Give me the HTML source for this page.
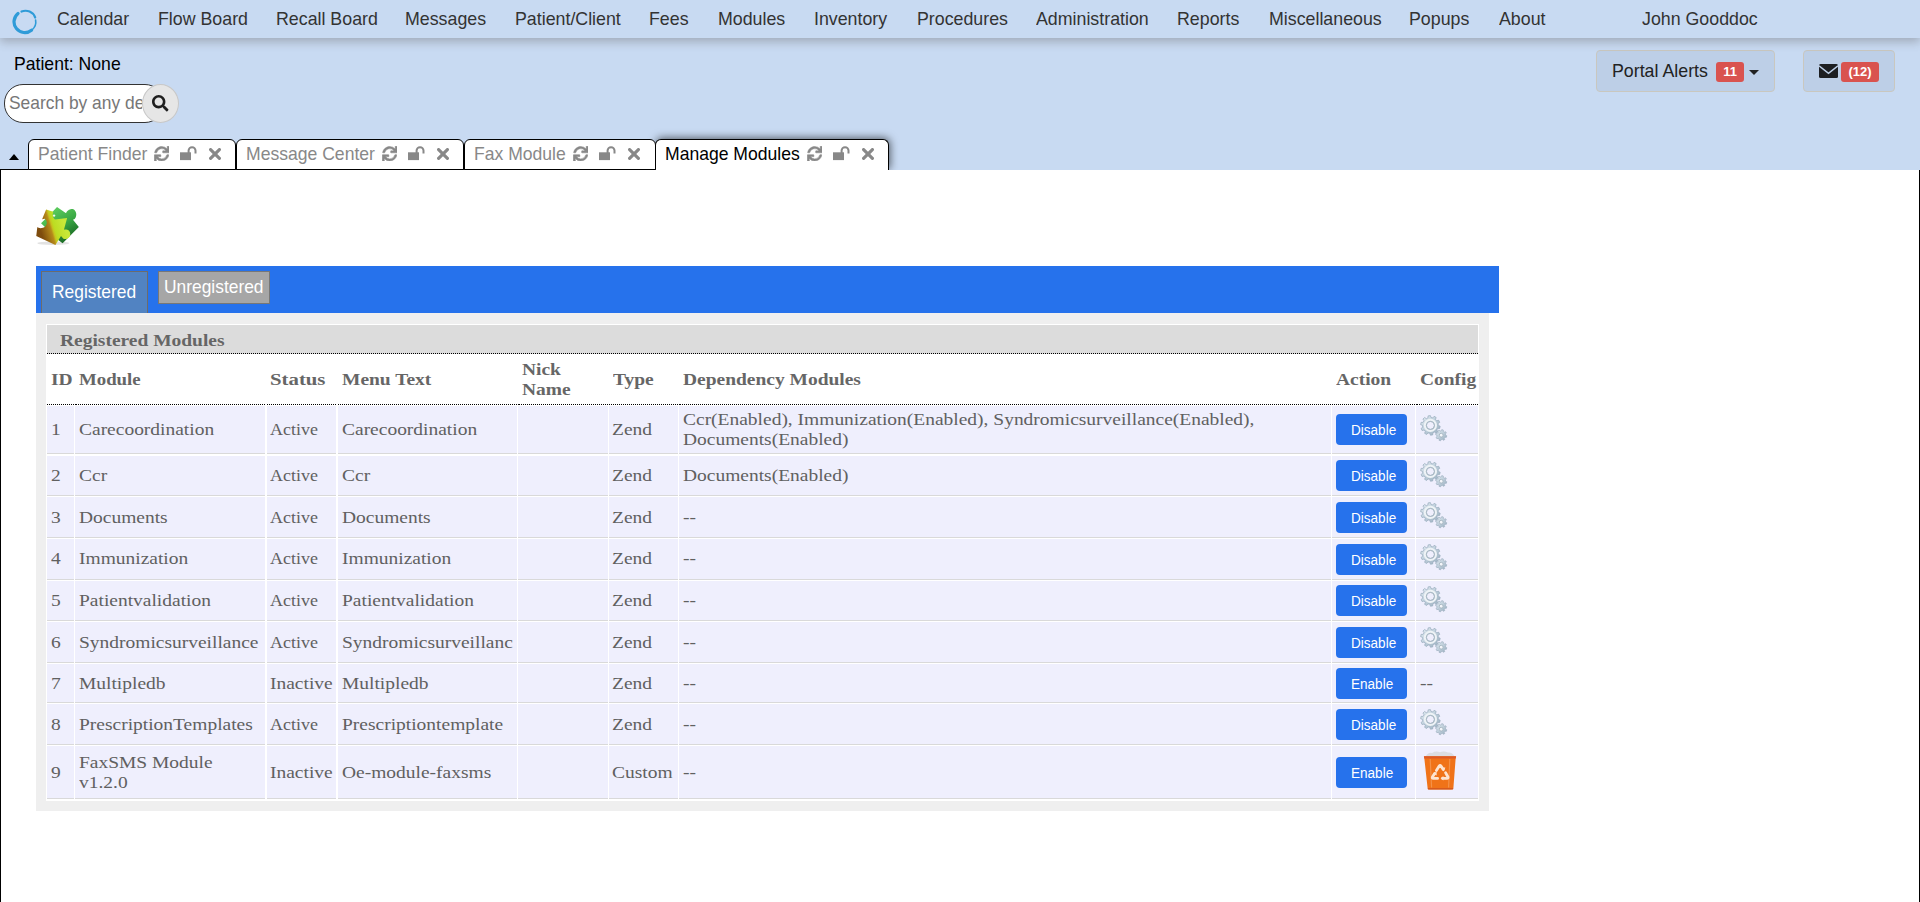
<!DOCTYPE html>
<html><head><meta charset="utf-8">
<style>
*{box-sizing:border-box;}
html,body{margin:0;padding:0;}
body{width:1920px;height:902px;overflow:hidden;position:relative;background:#c8daf2;font-family:"Liberation Sans",sans-serif;}
.a{position:absolute;white-space:nowrap;}
#nav{position:absolute;left:0;top:0;width:1920px;height:38px;background:#c8daf2;box-shadow:0 4px 9px rgba(80,76,70,0.32);z-index:2;}
.ni{position:absolute;top:8px;font-size:18.2px;color:#333;line-height:22px;transform:scaleX(0.978);transform-origin:0 0;}
#content{position:absolute;left:0;top:170px;width:1920px;height:732px;background:#fff;border-left:1px solid #000;border-right:1px solid #000;z-index:1;}
.tab{position:absolute;top:139px;height:31px;background:#fff;border:1px solid #000;border-bottom:1px solid #000;border-radius:6px 6px 0 0;z-index:3;}
.tab .t{position:absolute;left:8px;top:4px;font-size:18.2px;color:#888;line-height:20px;transform:scaleX(0.966);transform-origin:0 0;}
.tab.act{z-index:2;border-bottom:none;height:31px;box-shadow:1px -1px 9px rgba(0,0,0,0.6);clip-path:inset(-14px -14px 0 -14px);}
.tab.act .t{color:#000;}
.s{display:inline-block;transform-origin:0 50%;transform:scaleX(1.18);}
.srf{font-family:"Liberation Serif",serif;font-size:16.5px;color:#606060;}
.hb{font-weight:bold;color:#666;}
.cell{position:absolute;background:#efeffd;border-bottom:1px solid #d9d9d9;}
.btn{position:absolute;left:1336px;width:71px;height:31px;background:#2672ec;border-radius:4px;color:#fff;font-family:"Liberation Sans",sans-serif;font-size:15.4px;line-height:31px;padding-left:15px;}
.ttl{background:#dcdcdc;border-bottom:1px dotted #000;z-index:5;}
.hc{background:#fff;border-bottom:1px dotted #000;z-index:5;display:flex;flex-direction:column;justify-content:center;padding-left:4px;padding-top:2px;font-family:"Liberation Serif",serif;font-size:16.5px;font-weight:bold;color:#666;}
.cell{background:#efeffd;border-bottom:1px solid #d9d9d9;z-index:5;display:flex;flex-direction:column;justify-content:center;padding-left:4px;font-family:"Liberation Serif",serif;font-size:16.5px;color:#606060;}
.ln{line-height:20px;height:20px;white-space:nowrap;position:relative;}
.cell .btn{position:relative;left:0;}
.gear{position:relative;top:-2px;}
.trash{position:relative;left:3px;top:-2px;}
.s2{display:inline-block;transform-origin:0 50%;transform:scaleX(0.88);}
</style></head><body>
<div id="nav">
  
  <div class="ni" style="left:57px">Calendar</div>
  <div class="ni" style="left:158px">Flow Board</div>
  <div class="ni" style="left:276px">Recall Board</div>
  <div class="ni" style="left:405px">Messages</div>
  <div class="ni" style="left:515px">Patient/Client</div>
  <div class="ni" style="left:649px">Fees</div>
  <div class="ni" style="left:718px">Modules</div>
  <div class="ni" style="left:814px">Inventory</div>
  <div class="ni" style="left:916.5px">Procedures</div>
  <div class="ni" style="left:1036px">Administration</div>
  <div class="ni" style="left:1177px">Reports</div>
  <div class="ni" style="left:1268.5px">Miscellaneous</div>
  <div class="ni" style="left:1409px">Popups</div>
  <div class="ni" style="left:1498.5px">About</div>
  <div class="ni" style="left:1642px">John Gooddoc</div>
</div>
<div class="a" style="left:14px;top:53px;font-size:18.2px;color:#000;line-height:22px;transform:scaleX(0.968);transform-origin:0 0">Patient: None</div>
<div class="a" style="left:4px;top:84px;width:160px;height:39px;background:#fff;border:1px solid #333;border-radius:19px;"></div>
<div class="a" style="left:9px;top:92px;width:133px;overflow:hidden;line-height:22px"><div style="font-size:18.2px;color:#777;transform:scaleX(0.956);transform-origin:0 0">Search by any demographics</div></div>
<div class="a" style="left:142px;top:84px;width:37px;height:39px;background:#e6e6e6;border:1px solid #c8c8c8;border-radius:50%;"></div>

<div id="content"></div>
<div class="a" style="left:0;top:169px;width:656px;height:1px;background:#000;z-index:2"></div>
<div class="a" style="left:9px;top:154px;width:0;height:0;border-left:5px solid transparent;border-right:5px solid transparent;border-bottom:6px solid #000;z-index:3"></div>
<div class="tab" style="left:28px;width:208px"><span class="t" style="left:8.5px">Patient Finder</span></div>
<div class="tab" style="left:236px;width:228px"><span class="t" style="left:8.5px">Message Center</span></div>
<div class="tab" style="left:464px;width:192px"><span class="t" style="left:8.5px">Fax Module</span></div>
<div class="tab act" style="left:655px;width:234px"><span class="t" style="left:8.5px">Manage Modules</span></div>

<!-- content -->
<div class="a" style="left:36px;top:266px;width:1463px;height:47px;background:#2672ec;z-index:4"></div>
<div class="a" style="left:41px;top:271px;width:107px;height:42px;background:#5183c2;border:1px solid #6c6c6c;border-bottom:none;z-index:5"></div>
<div class="a" style="left:52px;top:281px;font-size:18.2px;color:#fff;z-index:6;line-height:22px;transform:scaleX(0.956);transform-origin:0 0">Registered</div>
<div class="a" style="left:158px;top:271px;width:112px;height:33px;background:#a6a6a6;border:1px solid #777;z-index:5"></div>
<div class="a" style="left:164px;top:276px;font-size:18.2px;color:#fff;z-index:6;line-height:22px;transform:scaleX(0.956);transform-origin:0 0">Unregistered</div>
<div class="a" style="left:36px;top:313px;width:1453px;height:498px;background:#efefef;z-index:4"></div>
<div class="a" style="left:46px;top:324px;width:1433px;height:477px;background:#fff;z-index:4"></div>
<svg width="0" height="0" style="position:absolute">
<defs>
<linearGradient id="gg" x1="0" y1="0" x2="1" y2="1"><stop offset="0" stop-color="#e4ecf2"/><stop offset="0.45" stop-color="#c2d2de"/><stop offset="1" stop-color="#98adbd"/></linearGradient>
<symbol id="gear" viewBox="0 0 28 28">
<path d="M18.30,11.40 L20.17,12.14 L19.72,14.43 L17.71,14.40 L16.79,16.04 L17.87,17.74 L16.16,19.33 L14.55,18.12 L12.84,18.91 L12.72,20.92 L10.40,21.20 L9.80,19.28 L7.96,18.91 L6.68,20.47 L4.64,19.33 L5.29,17.42 L4.01,16.04 L2.06,16.55 L1.08,14.43 L2.72,13.27 L2.50,11.40 L0.63,10.66 L1.08,8.37 L3.09,8.40 L4.01,6.76 L2.93,5.06 L4.64,3.47 L6.25,4.68 L7.96,3.89 L8.08,1.88 L10.40,1.60 L11.00,3.52 L12.84,3.89 L14.12,2.33 L16.16,3.47 L15.51,5.38 L16.79,6.76 L18.74,6.25 L19.72,8.37 L18.08,9.53 Z" fill="url(#gg)" stroke="#97aabb" stroke-width="0.7"/>
<circle cx="10.4" cy="11.4" r="5.6" fill="none" stroke="#eef3f6" stroke-width="2"/>
<circle cx="10.4" cy="11.4" r="4" fill="#efeffd" stroke="#9fb0bb" stroke-width="1"/>
<path d="M25.50,21.20 L26.78,21.73 L26.37,23.34 L25.00,23.21 L24.24,24.24 L24.77,25.51 L23.34,26.37 L22.46,25.31 L21.20,25.50 L20.67,26.78 L19.06,26.37 L19.19,25.00 L18.16,24.24 L16.89,24.77 L16.03,23.34 L17.09,22.46 L16.90,21.20 L15.62,20.67 L16.03,19.06 L17.40,19.19 L18.16,18.16 L17.63,16.89 L19.06,16.03 L19.94,17.09 L21.20,16.90 L21.73,15.62 L23.34,16.03 L23.21,17.40 L24.24,18.16 L25.51,17.63 L26.37,19.06 L25.31,19.94 Z" fill="url(#gg)" stroke="#97aabb" stroke-width="0.6"/>
<circle cx="21.2" cy="21.2" r="1.9" fill="#f4f6fa" stroke="#9fb0bb" stroke-width="0.8"/>
</symbol>
<symbol id="trash" viewBox="0 0 34 40">
<path d="M2.5,6.8 Q5,2 9,3 Q13,0.6 17,2.2 Q21,0.4 25,2.6 Q29,2 32,6.8 Z" fill="#dcdde2"/>
<path d="M1,6.3 L33,6.3 L32.6,9 L30.4,38 Q30,39.6 28,39.6 L6.5,39.6 Q4.8,39.6 4.6,38 L1.4,9 Z" fill="#f07318"/>
<path d="M0.9,6.3 L33.1,6.3 L32.8,8.6 L1.2,8.6 Z" fill="#dd5a26"/>
<path d="M7.2,9 L8.6,37.5 M26.8,9 L25.6,37.5" stroke="#f59a55" stroke-width="1.2" opacity="0.8"/>
<path d="M4.6,38 L30.4,38 L30,39.6 L5,39.6 Z" fill="#d65a1e"/>
<g fill="none" stroke="#fde4d0" stroke-width="2.8" stroke-linejoin="round" stroke-linecap="round"><path d="M13.4,20.6 L16.2,16 Q17.1,14.8 18,16 L20.2,19.6"/><path d="M22.6,22.8 L25,27 Q25.5,28.4 24,28.4 L19.6,28.4"/><path d="M14.6,28.4 L10.2,28.4 Q8.8,28.4 9.4,27 L11.6,23.4"/></g><g fill="#fde4d0"><path d="M18.6,17.6 L22.4,17.6 L20.8,21.6 Z"/><path d="M20.4,26 L20.4,30.6 L17.6,28.3 Z"/><path d="M9.8,23.6 L13.6,21.8 L13.6,25.6 Z"/></g>
</symbol>
<symbol id="sync" viewBox="-10 -10 532 532"><path fill="#888" stroke="#888" stroke-width="18" stroke-linejoin="round" d="M440.65 12.57l4 82.77A247.16 247.16 0 0 0 255.83 8C134.73 8 33.91 94.92 12.29 209.82A12 12 0 0 0 24.09 224h49.05a12 12 0 0 0 11.67-9.26 175.910 175.910 0 0 1 317-56.94l-101.46-4.86a12 12 0 0 0-12.57 12v47.41a12 12 0 0 0 12 12H500a12 12 0 0 0 12-12V12a12 12 0 0 0-12-12h-47.37a12 12 0 0 0-11.98 12.57zM255.83 432a175.61 175.61 0 0 1-146-77.8l101.8 4.87a12 12 0 0 0 12.57-12v-47.4a12 12 0 0 0-12-12H12a12 12 0 0 0-12 12V500a12 12 0 0 0 12 12h47.35a12 12 0 0 0 12-12.6l-4.150-82.57A247.17 247.17 0 0 0 255.83 504c121.11 0 221.93-86.92 243.55-201.82a12 12 0 0 0-11.8-14.18h-49.05a12 12 0 0 0-11.67 9.26A175.86 175.86 0 0 1 255.83 432z"/></symbol>
<symbol id="unlock" viewBox="0 0 17 15">
<rect x="0" y="6.3" width="11" height="7.8" fill="#888"/>
<path d="M8.6,7 V4.6 A3.45,3.45 0 0 1 15.5,4.6 V7.6" fill="none" stroke="#888" stroke-width="2"/>
</symbol>
<symbol id="times" viewBox="0 0 12 12">
<path d="M1.6,1.6 L10.4,10.4 M10.4,1.6 L1.6,10.4" stroke="#888" stroke-width="3.2" stroke-linecap="round"/>
</symbol>
</defs></svg>
<!-- tab icons -->
<svg class="a" style="left:153.5px;top:145.5px;z-index:6" width="15.5" height="15.5"><use href="#sync"/></svg>
<svg class="a" style="left:180px;top:146px;z-index:6" width="17" height="15"><use href="#unlock"/></svg>
<svg class="a" style="left:209px;top:148px;z-index:6" width="12" height="12"><use href="#times"/></svg>
<svg class="a" style="left:381.5px;top:145.5px;z-index:6" width="15.5" height="15.5"><use href="#sync"/></svg>
<svg class="a" style="left:408px;top:146px;z-index:6" width="17" height="15"><use href="#unlock"/></svg>
<svg class="a" style="left:437px;top:148px;z-index:6" width="12" height="12"><use href="#times"/></svg>
<svg class="a" style="left:572.5px;top:145.5px;z-index:6" width="15.5" height="15.5"><use href="#sync"/></svg>
<svg class="a" style="left:599px;top:146px;z-index:6" width="17" height="15"><use href="#unlock"/></svg>
<svg class="a" style="left:628px;top:148px;z-index:6" width="12" height="12"><use href="#times"/></svg>
<svg class="a" style="left:806.5px;top:145.5px;z-index:6" width="15.5" height="15.5"><use href="#sync"/></svg>
<svg class="a" style="left:833px;top:146px;z-index:6" width="17" height="15"><use href="#unlock"/></svg>
<svg class="a" style="left:862px;top:148px;z-index:6" width="12" height="12"><use href="#times"/></svg>
<!-- search icon -->
<svg class="a" style="left:152px;top:95px;z-index:3" width="16.5" height="16.5" viewBox="0 0 512 512"><path fill="#1f1f1f" d="M505 442.7L405.3 343c-4.5-4.5-10.600-7-17-7H372c27.6-35.3 44-79.7 44-128C416 93.100 322.900 0 208 0S0 93.100 0 208s93.100 208 208 208c48.3 0 92.7-16.4 128-44v16.3c0 6.4 2.5 12.5 7 17l99.7 99.7c9.4 9.4 24.6 9.4 33.9 0l28.3-28.3c9.4-9.4 9.4-24.6.1-34zM208 336c-70.7 0-128-57.2-128-128 0-70.7 57.2-128 128-128 70.7 0 128 57.2 128 128 0 70.7-57.2 128-128 128z"/></svg>
<!-- portal alerts -->
<div class="a" style="left:1596px;top:50px;width:179px;height:42px;background:#bdcfe7;border:1px solid #c9c7bf;border-radius:4px;"></div>
<div class="a" style="left:1612px;top:60px;font-size:18.2px;color:#222;line-height:22px;transform:scaleX(0.978);transform-origin:0 0">Portal Alerts</div>
<div class="a" style="left:1716px;top:62px;width:28px;height:20px;background:#d9534f;border-radius:3px;color:#fff;font-size:13px;font-weight:bold;line-height:20px;text-align:center">11</div>
<div class="a" style="left:1749px;top:70px;width:0;height:0;border-left:5px solid transparent;border-right:5px solid transparent;border-top:5px solid #222"></div>
<div class="a" style="left:1803px;top:50px;width:92px;height:42px;background:#bdcfe7;border:1px solid #c9c7bf;border-radius:4px;"></div>
<svg class="a" style="left:1819px;top:64px" width="19" height="14" viewBox="0 0 19 14"><rect x="0" y="0" width="19" height="14" rx="1.5" fill="#1d1f22"/><path d="M0,1.8 L9.5,9.4 L19,1.8" fill="none" stroke="#bdcfe7" stroke-width="1.5"/></svg>
<div class="a" style="left:1841px;top:62px;width:38px;height:20px;background:#d9534f;border-radius:3px;color:#fff;font-size:13px;font-weight:bold;line-height:20px;text-align:center">(12)</div>
<!-- puzzle -->
<svg class="a" style="left:32px;top:202px;z-index:3" width="52" height="48" viewBox="0 0 977 902">
<defs><linearGradient id="yg" gradientUnits="userSpaceOnUse" x1="180" y1="600" x2="620" y2="470"><stop offset="0" stop-color="#7e4c0e"/><stop offset="0.42" stop-color="#b68a1a"/><stop offset="0.5" stop-color="#c6c41e"/><stop offset="0.58" stop-color="#bcdc22"/><stop offset="1" stop-color="#c8e838"/></linearGradient>
<linearGradient id="grg" gradientUnits="userSpaceOnUse" x1="450" y1="150" x2="750" y2="650"><stop offset="0" stop-color="#58c85a"/><stop offset="0.5" stop-color="#3aa845"/><stop offset="1" stop-color="#1c6e26"/></linearGradient></defs>
<ellipse cx="400" cy="775" rx="300" ry="32" fill="#e2e2e2"/>
<path d="M470,95 L640,210 C650,170 700,125 765,130 C830,150 860,250 800,320 L770,335 L880,470 L575,775 L500,720 L170,400 L400,170 Z" fill="url(#grg)"/>
<path d="M265,140 L400,185 C380,230 385,290 430,330 L660,300 L600,520 C650,505 720,530 720,600 C715,680 650,710 590,690 L545,640 L440,810 L80,640 L100,470 C130,500 200,500 250,460 C290,420 290,350 240,315 L190,325 Z" fill="url(#yg)"/>
<circle cx="415" cy="255" r="22" fill="#fff" opacity="0.9"/>
</svg>
<!-- logo -->
<svg class="a" style="left:12px;top:8px;z-index:3" width="27" height="28" viewBox="0 0 27 28"><g fill="none" stroke="#2f9bd8" stroke-linecap="round"><path d="M6,5.5 A10.3,10.3 0 0 0 19.5,22.2" stroke-width="3.2"/><path d="M9.5,3.6 A10.3,10.3 0 0 1 23.2,9.5" stroke-width="2.2"/><path d="M23.6,12 A10.3,10.3 0 0 1 19.8,22" stroke-width="1.6"/></g></svg>
<!--TABLE-->
<div class="a ttl" style="left:47px;top:325px;width:1431px;height:29px"><span class="s hb srf" style="position:absolute;left:13px;top:6px">Registered Modules</span></div>
<div class="a hc" style="left:47px;top:354px;width:27px;height:51px"><div class="ln" style="left:0px"><span class="s">ID</span></div></div>
<div class="a hc" style="left:75px;top:354px;width:190px;height:51px"><div class="ln" style="left:0px"><span class="s" style="transform:scaleX(1.14)">Module</span></div></div>
<div class="a hc" style="left:267px;top:354px;width:69px;height:51px"><div class="ln" style="left:-1px"><span class="s" style="transform:scaleX(1.26)">Status</span></div></div>
<div class="a hc" style="left:338px;top:354px;width:179px;height:51px"><div class="ln" style="left:0px"><span class="s">Menu Text</span></div></div>
<div class="a hc" style="left:518px;top:354px;width:90px;height:51px"><div class="ln" style="left:0px"><span class="s">Nick</span></div><div class="ln" style="left:0px"><span class="s">Name</span></div></div>
<div class="a hc" style="left:609px;top:354px;width:69px;height:51px"><div class="ln" style="left:0px"><span class="s">Type</span></div></div>
<div class="a hc" style="left:679px;top:354px;width:652px;height:51px"><div class="ln" style="left:0px"><span class="s">Dependency Modules</span></div></div>
<div class="a hc" style="left:1332px;top:354px;width:83px;height:51px"><div class="ln" style="left:0px"><span class="s">Action</span></div></div>
<div class="a hc" style="left:1416px;top:354px;width:62px;height:51px"><div class="ln" style="left:0px"><span class="s">Config</span></div></div>
<div class="a cell" style="left:47px;top:406px;width:27px;height:48px"><div class="ln" style="top:0px;left:0px"><span class="s">1</span></div></div>
<div class="a cell" style="left:75px;top:406px;width:190px;height:48px"><div class="ln" style="top:0px;left:0px"><span class="s">Carecoordination</span></div></div>
<div class="a cell" style="left:267px;top:406px;width:69px;height:48px"><div class="ln" style="top:0px;left:-1px"><span class="s" style="transform:scaleX(1.09)">Active</span></div></div>
<div class="a cell" style="left:338px;top:406px;width:179px;height:48px"><div class="ln" style="top:0px;left:0px"><span class="s">Carecoordination</span></div></div>
<div class="a cell" style="left:518px;top:406px;width:90px;height:48px"></div>
<div class="a cell" style="left:609px;top:406px;width:69px;height:48px"><div class="ln" style="top:0px;left:-1px"><span class="s">Zend</span></div></div>
<div class="a cell" style="left:679px;top:406px;width:652px;height:48px"><div class="ln" style="top:0px;left:0px"><span class="s">Ccr(Enabled), Immunization(Enabled), Syndromicsurveillance(Enabled),</span></div><div class="ln" style="top:0px;left:0px"><span class="s">Documents(Enabled)</span></div></div>
<div class="a cell" style="left:1332px;top:406px;width:83px;height:48px"><div class="btn"><span class="s2">Disable</span></div></div>
<div class="a cell" style="left:1416px;top:406px;width:62px;height:48px"><svg class="gear" width="28" height="28"><use href="#gear"/></svg></div>
<div class="a cell" style="left:47px;top:456px;width:27px;height:40px"><div class="ln" style="top:0px;left:0px"><span class="s">2</span></div></div>
<div class="a cell" style="left:75px;top:456px;width:190px;height:40px"><div class="ln" style="top:0px;left:0px"><span class="s">Ccr</span></div></div>
<div class="a cell" style="left:267px;top:456px;width:69px;height:40px"><div class="ln" style="top:0px;left:-1px"><span class="s" style="transform:scaleX(1.09)">Active</span></div></div>
<div class="a cell" style="left:338px;top:456px;width:179px;height:40px"><div class="ln" style="top:0px;left:0px"><span class="s">Ccr</span></div></div>
<div class="a cell" style="left:518px;top:456px;width:90px;height:40px"></div>
<div class="a cell" style="left:609px;top:456px;width:69px;height:40px"><div class="ln" style="top:0px;left:-1px"><span class="s">Zend</span></div></div>
<div class="a cell" style="left:679px;top:456px;width:652px;height:40px"><div class="ln" style="top:0px;left:0px"><span class="s">Documents(Enabled)</span></div></div>
<div class="a cell" style="left:1332px;top:456px;width:83px;height:40px"><div class="btn"><span class="s2">Disable</span></div></div>
<div class="a cell" style="left:1416px;top:456px;width:62px;height:40px"><svg class="gear" width="28" height="28"><use href="#gear"/></svg></div>
<div class="a cell" style="left:47px;top:497px;width:27px;height:41px"><div class="ln" style="top:1px;left:0px"><span class="s">3</span></div></div>
<div class="a cell" style="left:75px;top:497px;width:190px;height:41px"><div class="ln" style="top:1px;left:0px"><span class="s">Documents</span></div></div>
<div class="a cell" style="left:267px;top:497px;width:69px;height:41px"><div class="ln" style="top:1px;left:-1px"><span class="s" style="transform:scaleX(1.09)">Active</span></div></div>
<div class="a cell" style="left:338px;top:497px;width:179px;height:41px"><div class="ln" style="top:1px;left:0px"><span class="s">Documents</span></div></div>
<div class="a cell" style="left:518px;top:497px;width:90px;height:41px"></div>
<div class="a cell" style="left:609px;top:497px;width:69px;height:41px"><div class="ln" style="top:1px;left:-1px"><span class="s">Zend</span></div></div>
<div class="a cell" style="left:679px;top:497px;width:652px;height:41px"><div class="ln" style="top:1px;left:0px"><span class="s">--</span></div></div>
<div class="a cell" style="left:1332px;top:497px;width:83px;height:41px"><div class="btn"><span class="s2">Disable</span></div></div>
<div class="a cell" style="left:1416px;top:497px;width:62px;height:41px"><svg class="gear" width="28" height="28"><use href="#gear"/></svg></div>
<div class="a cell" style="left:47px;top:539px;width:27px;height:41px"><div class="ln" style="top:0px;left:0px"><span class="s">4</span></div></div>
<div class="a cell" style="left:75px;top:539px;width:190px;height:41px"><div class="ln" style="top:0px;left:0px"><span class="s">Immunization</span></div></div>
<div class="a cell" style="left:267px;top:539px;width:69px;height:41px"><div class="ln" style="top:0px;left:-1px"><span class="s" style="transform:scaleX(1.09)">Active</span></div></div>
<div class="a cell" style="left:338px;top:539px;width:179px;height:41px"><div class="ln" style="top:0px;left:0px"><span class="s">Immunization</span></div></div>
<div class="a cell" style="left:518px;top:539px;width:90px;height:41px"></div>
<div class="a cell" style="left:609px;top:539px;width:69px;height:41px"><div class="ln" style="top:0px;left:-1px"><span class="s">Zend</span></div></div>
<div class="a cell" style="left:679px;top:539px;width:652px;height:41px"><div class="ln" style="top:0px;left:0px"><span class="s">--</span></div></div>
<div class="a cell" style="left:1332px;top:539px;width:83px;height:41px"><div class="btn"><span class="s2">Disable</span></div></div>
<div class="a cell" style="left:1416px;top:539px;width:62px;height:41px"><svg class="gear" width="28" height="28"><use href="#gear"/></svg></div>
<div class="a cell" style="left:47px;top:581px;width:27px;height:40px"><div class="ln" style="top:0px;left:0px"><span class="s">5</span></div></div>
<div class="a cell" style="left:75px;top:581px;width:190px;height:40px"><div class="ln" style="top:0px;left:0px"><span class="s">Patientvalidation</span></div></div>
<div class="a cell" style="left:267px;top:581px;width:69px;height:40px"><div class="ln" style="top:0px;left:-1px"><span class="s" style="transform:scaleX(1.09)">Active</span></div></div>
<div class="a cell" style="left:338px;top:581px;width:179px;height:40px"><div class="ln" style="top:0px;left:0px"><span class="s">Patientvalidation</span></div></div>
<div class="a cell" style="left:518px;top:581px;width:90px;height:40px"></div>
<div class="a cell" style="left:609px;top:581px;width:69px;height:40px"><div class="ln" style="top:0px;left:-1px"><span class="s">Zend</span></div></div>
<div class="a cell" style="left:679px;top:581px;width:652px;height:40px"><div class="ln" style="top:0px;left:0px"><span class="s">--</span></div></div>
<div class="a cell" style="left:1332px;top:581px;width:83px;height:40px"><div class="btn"><span class="s2">Disable</span></div></div>
<div class="a cell" style="left:1416px;top:581px;width:62px;height:40px"><svg class="gear" width="28" height="28"><use href="#gear"/></svg></div>
<div class="a cell" style="left:47px;top:622px;width:27px;height:41px"><div class="ln" style="top:1px;left:0px"><span class="s">6</span></div></div>
<div class="a cell" style="left:75px;top:622px;width:190px;height:41px"><div class="ln" style="top:1px;left:0px"><span class="s">Syndromicsurveillance</span></div></div>
<div class="a cell" style="left:267px;top:622px;width:69px;height:41px"><div class="ln" style="top:1px;left:-1px"><span class="s" style="transform:scaleX(1.09)">Active</span></div></div>
<div class="a cell" style="left:338px;top:622px;width:179px;height:41px"><div class="ln" style="top:1px;left:0px"><span class="s">Syndromicsurveillanc</span></div></div>
<div class="a cell" style="left:518px;top:622px;width:90px;height:41px"></div>
<div class="a cell" style="left:609px;top:622px;width:69px;height:41px"><div class="ln" style="top:1px;left:-1px"><span class="s">Zend</span></div></div>
<div class="a cell" style="left:679px;top:622px;width:652px;height:41px"><div class="ln" style="top:1px;left:0px"><span class="s">--</span></div></div>
<div class="a cell" style="left:1332px;top:622px;width:83px;height:41px"><div class="btn"><span class="s2">Disable</span></div></div>
<div class="a cell" style="left:1416px;top:622px;width:62px;height:41px"><svg class="gear" width="28" height="28"><use href="#gear"/></svg></div>
<div class="a cell" style="left:47px;top:664px;width:27px;height:39px"><div class="ln" style="top:1px;left:0px"><span class="s">7</span></div></div>
<div class="a cell" style="left:75px;top:664px;width:190px;height:39px"><div class="ln" style="top:1px;left:0px"><span class="s">Multipledb</span></div></div>
<div class="a cell" style="left:267px;top:664px;width:69px;height:39px"><div class="ln" style="top:1px;left:-1px"><span class="s">Inactive</span></div></div>
<div class="a cell" style="left:338px;top:664px;width:179px;height:39px"><div class="ln" style="top:1px;left:0px"><span class="s">Multipledb</span></div></div>
<div class="a cell" style="left:518px;top:664px;width:90px;height:39px"></div>
<div class="a cell" style="left:609px;top:664px;width:69px;height:39px"><div class="ln" style="top:1px;left:-1px"><span class="s">Zend</span></div></div>
<div class="a cell" style="left:679px;top:664px;width:652px;height:39px"><div class="ln" style="top:1px;left:0px"><span class="s">--</span></div></div>
<div class="a cell" style="left:1332px;top:664px;width:83px;height:39px"><div class="btn"><span class="s2">Enable</span></div></div>
<div class="a cell" style="left:1416px;top:664px;width:62px;height:39px"><div class="ln" style="top:1px"><span class="s">--</span></div></div>
<div class="a cell" style="left:47px;top:704px;width:27px;height:41px"><div class="ln" style="top:1px;left:0px"><span class="s">8</span></div></div>
<div class="a cell" style="left:75px;top:704px;width:190px;height:41px"><div class="ln" style="top:1px;left:0px"><span class="s">PrescriptionTemplates</span></div></div>
<div class="a cell" style="left:267px;top:704px;width:69px;height:41px"><div class="ln" style="top:1px;left:-1px"><span class="s" style="transform:scaleX(1.09)">Active</span></div></div>
<div class="a cell" style="left:338px;top:704px;width:179px;height:41px"><div class="ln" style="top:1px;left:0px"><span class="s">Prescriptiontemplate</span></div></div>
<div class="a cell" style="left:518px;top:704px;width:90px;height:41px"></div>
<div class="a cell" style="left:609px;top:704px;width:69px;height:41px"><div class="ln" style="top:1px;left:-1px"><span class="s">Zend</span></div></div>
<div class="a cell" style="left:679px;top:704px;width:652px;height:41px"><div class="ln" style="top:1px;left:0px"><span class="s">--</span></div></div>
<div class="a cell" style="left:1332px;top:704px;width:83px;height:41px"><div class="btn"><span class="s2">Disable</span></div></div>
<div class="a cell" style="left:1416px;top:704px;width:62px;height:41px"><svg class="gear" width="28" height="28"><use href="#gear"/></svg></div>
<div class="a cell" style="left:47px;top:746px;width:27px;height:53px"><div class="ln" style="top:0.5px;left:0px"><span class="s">9</span></div></div>
<div class="a cell" style="left:75px;top:746px;width:190px;height:53px"><div class="ln" style="top:0.5px;left:0px"><span class="s">FaxSMS Module</span></div><div class="ln" style="top:0.5px;left:0px"><span class="s">v1.2.0</span></div></div>
<div class="a cell" style="left:267px;top:746px;width:69px;height:53px"><div class="ln" style="top:0.5px;left:-1px"><span class="s">Inactive</span></div></div>
<div class="a cell" style="left:338px;top:746px;width:179px;height:53px"><div class="ln" style="top:0.5px;left:0px"><span class="s">Oe-module-faxsms</span></div></div>
<div class="a cell" style="left:518px;top:746px;width:90px;height:53px"></div>
<div class="a cell" style="left:609px;top:746px;width:69px;height:53px"><div class="ln" style="top:0.5px;left:-1px"><span class="s">Custom</span></div></div>
<div class="a cell" style="left:679px;top:746px;width:652px;height:53px"><div class="ln" style="top:0.5px;left:0px"><span class="s">--</span></div></div>
<div class="a cell" style="left:1332px;top:746px;width:83px;height:53px"><div class="btn"><span class="s2">Enable</span></div></div>
<div class="a cell" style="left:1416px;top:746px;width:62px;height:53px"><svg class="trash" width="34" height="40"><use href="#trash"/></svg></div>
<!--/TABLE-->
</body></html>
